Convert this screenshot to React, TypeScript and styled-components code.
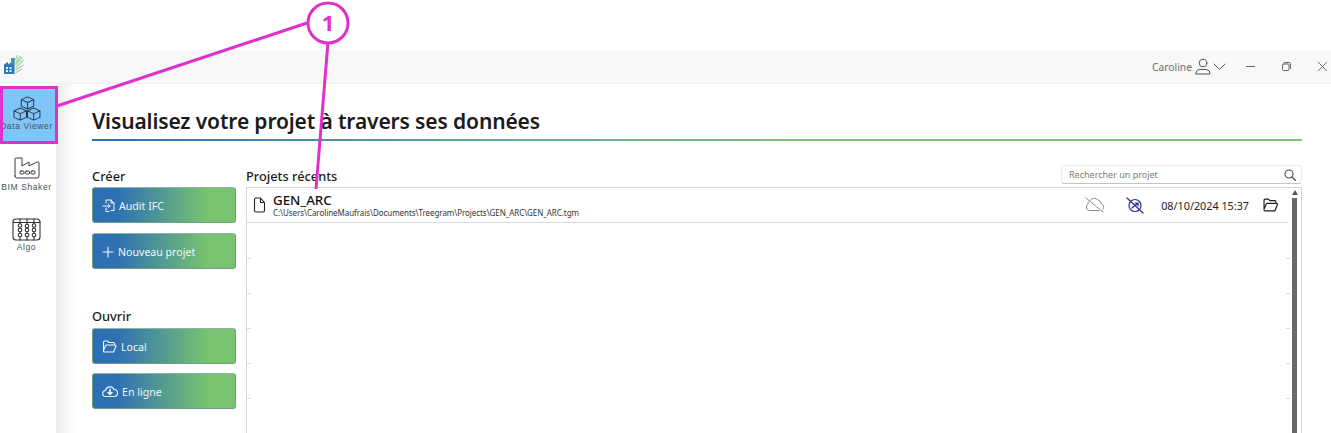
import React from "react";
import styled, { createGlobalStyle } from "styled-components";

const Global = createGlobalStyle`
  html, body { margin: 0; padding: 0; background: #fff; }
  body { font-family: "Noto Sans", "Open Sans", sans-serif; color: #1c1c1c; }
`;
const Page = styled.div`
  position: relative; width: 1331px; height: 433px; overflow: hidden; background: #fff;
`;
const TopGap = styled.div`height: 50px;`;
const TitleBar = styled.header`
  height: 34px; box-sizing: border-box; display: flex; align-items: center;
  background: #f8f8f8; border-bottom: 1px solid #f0f0f0; padding: 0 0 0 3px;
`;
const Logo = styled.svg`width: 21px; height: 21px; margin-top: -2px;`;
const Spacer = styled.div`flex: 1;`;
const UserName = styled.span`font-size: 10.3px; color: #6e6e6e; margin-right: 3px;`;
const WinButtons = styled.div`
  display: flex; align-items: center; gap: 27px; margin-left: 20px; padding-right: 4px;
`;
const Body = styled.div`display: flex; height: 349px;`;
const Sidebar = styled.nav`
  width: 56px; flex: none; display: flex; flex-direction: column; align-items: stretch;
  padding-top: 3px; background: #fff;
`;
const NavItem = styled.div<{ $active?: boolean; $h: number; $pt: number; $gap: number }>`
  height: ${(p) => p.$h}px; display: flex; flex-direction: column; align-items: center;
  justify-content: flex-start; background: ${(p) => (p.$active ? "#80c5fa" : "transparent")};
  box-sizing: border-box; padding: ${(p) => p.$pt}px 3px 0 0; gap: ${(p) => p.$gap}px;
`;
const NavLabel = styled.span`
  font-family: "Liberation Sans", sans-serif; font-size: 8.5px; letter-spacing: 0.6px; color: #46525c;
  white-space: nowrap; line-height: 10px;
`;
const Main = styled.main`
  flex: 1; min-width: 0; padding: 0 29px 0 36px; display: flex; flex-direction: column;
  background: linear-gradient(90deg, #ececec 0, #fafafa 14px, #fff 24px);
`;
const Title = styled.h1`
  margin: 22px 0 0; font-size: 21px; line-height: 30px; font-weight: 600; color: #1b1b1b;
  letter-spacing: -0.13px;
`;
const Rule = styled.div`
  height: 2px; margin-top: 3px; background: linear-gradient(90deg, #2a6db5 0%, #5fa58f 30%, #7cc673 62%);
`;
const Columns = styled.div`display: flex; gap: 10px; margin-top: 24px; flex: 1; min-height: 0;`;
const Left = styled.div`width: 144px; flex: none; display: flex; flex-direction: column;`;
const SectionLabel = styled.div<{ $gap?: number }>`
  font-size: 12.8px; font-weight: 500; line-height: 22px; color: #1c1c1c; margin-top: ${(p) => p.$gap ?? 0}px;
`;
const ActionButton = styled.button<{ $mt?: number; $gap?: number }>`
  width: 144px; height: 36px; flex: none; box-sizing: border-box; margin-top: ${(p) => p.$mt ?? 0}px;
  padding: 1px 0 0 9px; display: flex; align-items: center; gap: ${(p) => p.$gap ?? 4}px;
  border: 1px solid #6f9e7e; border-top-color: #8fb5a0; border-radius: 3px;
  background: linear-gradient(90deg, #2a6fb5 0%, #2f72b2 18%, #78c270 80%, #78c270 100%);
  color: #f2f7fb; font-family: inherit; font-size: 10.6px; line-height: 14px; text-align: left;
`;
const Right = styled.div`flex: 1; min-width: 0; display: flex; flex-direction: column;`;
const RightHead = styled.div`display: flex; align-items: flex-end; justify-content: space-between; height: 22px;`;
const Search = styled.div`
  width: 241px; height: 19px; box-sizing: border-box; display: flex; align-items: center;
  justify-content: space-between; padding: 0 5px 0 7px; margin-bottom: 3px;
  border: 1px solid #ededed; border-bottom-color: #c4c4c4; border-radius: 3px;
  font-size: 9px; color: #7c7c7c; background: #fff;
`;
const Table = styled.div`
  position: relative; flex: 1; min-height: 0; border: 1px solid #d6d6d6; border-bottom: none;
  background: #fff;
`;
const Row = styled.div`
  height: 35px; box-sizing: border-box; margin-right: 13px; display: flex; align-items: center;
  border-bottom: 1px solid #d9d9d9; padding-left: 6px;
`;
const FileBlock = styled.div`display: flex; flex-direction: column; margin-left: 7px; flex: 1;`;
const FileName = styled.div`font-size: 13.3px; font-weight: 500; line-height: 15px; color: #111;`;
const FilePath = styled.div`font-size: 8px; line-height: 10px; color: #333; letter-spacing: -0.06px;`;
const RowDate = styled.span`font-size: 10.8px; color: #222; margin: 0 13px 0 17px;`;
const RowEnd = styled.div`width: 9px; flex: none;`;
const ScrollBar = styled.div`
  position: absolute; top: 2px; right: 4px; bottom: 0; width: 5px;
  display: flex; flex-direction: column; align-items: center;
`;
const ScrollArrow = styled.div`
  width: 0; height: 0; border-left: 3.5px solid transparent; border-right: 3.5px solid transparent;
  border-bottom: 5px solid #555;
`;
const ScrollThumb = styled.div`flex: 1; width: 5px; margin-top: 3px; background: #6a6a6a;`;
const Tick = styled.div<{ $side: "left" | "right"; $top: number }>`
  position: absolute; top: ${(p) => p.$top}px; ${(p) => p.$side}: ${(p) => (p.$side === "right" ? 11 : 0)}px;
  width: 4px; height: 1px; background: #dcdcdc;
`;
const Overlay = styled.svg`position: absolute; left: 0; top: 0; pointer-events: none;`;
const CalloutNumber = styled.text`
  font-family: "Open Sans", sans-serif; font-size: 22px; font-weight: 700; fill: #e030cc;
`;

const Stroke = { fill: "none", stroke: "currentColor", strokeLinecap: "round", strokeLinejoin: "round" } as const;

const Cubes = () => (
  <svg width="28" height="25" viewBox="1 0 27 27" preserveAspectRatio="none" style={{ color: "#2d3a44" }} {...Stroke} strokeWidth={1}>
    <path d="M15 1l6 3v7l-6 3-6-3V4z M9 4l6 3 6-3 M15 7v7" />
    <path d="M8 13l6 3v7l-6 3-6-3v-7z M2 16l6 3 6-3 M8 19v7" />
    <path d="M21 13l6 3v7l-6 3-6-3v-7z M15 16l6 3 6-3 M21 19v7" />
  </svg>
);
const Factory = () => (
  <svg width="26" height="22" viewBox="0 0 26 22" style={{ color: "#3c3c3c" }} {...Stroke} strokeWidth={1}>
    <path d="M1 19V2q0-1 1-1h6v8l7-4v4l8-4q2-.5 2 1V19q0 2-2 2H3q-2 0-2-2z" />
    <rect x="6" y="14" width="4" height="3" rx="1" />
    <rect x="11.500" y="14" width="4" height="3" rx="1" />
    <rect x="17" y="14" width="4" height="3" rx="1" />
  </svg>
);
const Abacus = () => (
  <svg width="29" height="23" viewBox="0 0 29 23" style={{ color: "#333" }} {...Stroke} strokeWidth={1.1}>
    <rect x="1" y="1" width="27" height="21" rx="3" />
    <path d="M1 4.500h27M8 1v21M15 1v21M22 1v21" />
    {[8, 15, 22].map((x) => (
      <g key={x}>
        <circle cx={x} cy={x === 15 ? 8 : 7.500} r="1.800" fill="#f8f8f8" />
        <circle cx={x} cy="12" r="1.800" fill="#fff" />
        <circle cx={x} cy="17" r="1.800" fill="#fff" />
      </g>
    ))}
  </svg>
);
const AuditIcon = () => (
  <svg width="15" height="15" viewBox="0 0 15 15" {...Stroke} strokeWidth={1}>
    <path d="M4 5V2h5l3 3v7.500H9M9 2v3h3M4 10v3.500h3M1 8h7M6 6l2 2-2 2" />
  </svg>
);
const PlusIcon = () => (
  <svg width="12" height="12" viewBox="0 0 12 12" {...Stroke} strokeWidth={1.1}>
    <path d="M6 1v10M1 6h10" />
  </svg>
);
const FolderOpen = ({ w = 15, h = 13 }: { w?: number; h?: number }) => (
  <svg width={w} height={h} viewBox="0 0 15 13" {...Stroke} strokeWidth={1.1}>
    <path d="M1.500 10.500V2q0-1 1-1h3l1.500 1.500h4.500q1 0 1 1V5M1.500 11.500q.5.5 1 .5h9l2.500-6q0-1-1-1H4.500q-.7 0-1 .7L1.500 10.500" />
  </svg>
);
const CloudDown = () => (
  <svg width="16" height="13" viewBox="0 0 16 13" {...Stroke} strokeWidth={1.1}>
    <path d="M4 11.500a3 3 0 0 1-.5-6A4.500 4.500 0 0 1 12 4.500a3.500 3.500 0 0 1 0 7z" />
    <path d="M8 4.500v4.500M6 7.500l2 2 2-2" strokeWidth={1.6} />
  </svg>
);
const FileIcon = () => (
  <svg width="13" height="16" viewBox="0 0 13 16" style={{ color: "#222", flex: "none" }} {...Stroke} strokeWidth={1.1}>
    <path d="M1.500 2.500q0-1.500 1.500-1.500h4.500l4 4.500v8q0 1.500-1.500 1.500H3q-1.500 0-1.500-1.500zM7.500 1v4.500h4" />
  </svg>
);
const CloudOff = () => (
  <svg width="20" height="16" viewBox="0 0 20 16" style={{ color: "#8b8b8b", flex: "none" }} {...Stroke} strokeWidth={1}>
    <path d="M1 1l17 14M5 3.500A5 5 0 0 1 13 3a4 4 0 0 1 3 3.500 3.500 3.500 0 0 1 2 5.500M14 13.500H5a3.500 3.500 0 0 1-2-6.500q0-1 .5-2" />
  </svg>
);
const SyncOff = () => (
  <svg width="18" height="17" viewBox="0 0 18 17" style={{ color: "#2f2f8f", flex: "none", marginLeft: 21 }} {...Stroke} strokeWidth={1.2}>
    <path d="M1 1l16 15" />
    <circle cx="9" cy="8.500" r="6" />
    <path d="M6 11l6-5M9 6h3v3" />
  </svg>
);
const UserIcon = () => (
  <svg width="16" height="17" viewBox="0 0 16 17" style={{ color: "#555" }} {...Stroke} strokeWidth={1}>
    <circle cx="8" cy="5" r="3.800" />
    <path d="M1 15.500q0-4 4-4h6q4 0 4 4v.5H1z" />
  </svg>
);
const Chevron = () => (
  <svg width="13" height="8" viewBox="0 0 13 8" style={{ color: "#555", marginLeft: 2 }} {...Stroke} strokeWidth={1}>
    <path d="M1 1l5.500 5.500L12 1" />
  </svg>
);
const Minimize = () => (
  <svg width="9" height="9" viewBox="0 0 9 9" style={{ color: "#666" }} {...Stroke} strokeWidth={1}>
    <path d="M0 4.500h9" />
  </svg>
);
const Restore = () => (
  <svg width="9" height="9" viewBox="0 0 9 9" style={{ color: "#666" }} {...Stroke} strokeWidth={1}>
    <rect x="0.500" y="2" width="6.500" height="6.500" rx="1" />
    <path d="M2.500 .5h5q1 0 1 1v5" />
  </svg>
);
const CloseX = () => (
  <svg width="9" height="9" viewBox="0 0 9 9" style={{ color: "#666" }} {...Stroke} strokeWidth={1}>
    <path d="M.5.5l8 8M8.500.5l-8 8" />
  </svg>
);
const SearchIcon = () => (
  <svg width="12" height="12" viewBox="0 0 12 12" style={{ color: "#444" }} {...Stroke} strokeWidth={1.1}>
    <circle cx="5" cy="5" r="4" />
    <path d="M8 8l3.500 3.500" />
  </svg>
);

export default function App() {
  return (
    <Page>
      <Global />
      <TopGap />
      <TitleBar>
        <Logo viewBox="0 0 21 21">
          <path d="M1 9.500l4-2.500v2.500l3-2V3h3.500v16H1z" fill="#2f78b8" />
          <path d="M8 3h3.500v6H8z" fill="#3f9a9a" />
          <path d="M3 12h2v2H3zM6.500 12h2v2h-2zM3 15h2v2H3zM6.500 15h2v2h-2z" fill="#e8f2fa" />
          <path d="M12.500 5l2-5M12.500 8l5-7M12.500 10l7-8M12.500 13l8-8M12.500 15l8-5M12.500 18l6-4" stroke="#a3d4a6" strokeWidth="1.300" fill="none" />
        </Logo>
        <Spacer />
        <UserName>Caroline</UserName>
        <UserIcon />
        <Chevron />
        <WinButtons>
          <Minimize />
          <Restore />
          <CloseX />
        </WinButtons>
      </TitleBar>
      <Body>
        <Sidebar>
          <NavItem $active $h={55} $pt={9} $gap={0}>
            <Cubes />
            <NavLabel>Data Viewer</NavLabel>
          </NavItem>
          <NavItem $h={60} $pt={15} $gap={3}>
            <Factory />
            <NavLabel>BIM Shaker</NavLabel>
          </NavItem>
          <NavItem $h={60} $pt={16} $gap={1}>
            <Abacus />
            <NavLabel>Algo</NavLabel>
          </NavItem>
        </Sidebar>
        <Main>
          <Title>Visualisez votre projet à travers ses données</Title>
          <Rule />
          <Columns>
            <Left>
              <SectionLabel>Créer</SectionLabel>
              <ActionButton $gap={2}><AuditIcon />Audit IFC</ActionButton>
              <ActionButton $mt={10}><PlusIcon />Nouveau projet</ActionButton>
              <SectionLabel $gap={36}>Ouvrir</SectionLabel>
              <ActionButton $mt={1}><FolderOpen />Local</ActionButton>
              <ActionButton $mt={9}><CloudDown />En ligne</ActionButton>
            </Left>
            <Right>
              <RightHead>
                <SectionLabel>Projets récents</SectionLabel>
                <Search>Rechercher un projet<SearchIcon /></Search>
              </RightHead>
              <Table>
                <Row>
                  <FileIcon />
                  <FileBlock>
                    <FileName>GEN_ARC</FileName>
                    <FilePath>C:\Users\CarolineMaufrais\Documents\Treegram\Projects\GEN_ARC\GEN_ARC.tgm</FilePath>
                  </FileBlock>
                  <CloudOff />
                  <SyncOff />
                  <RowDate>08/10/2024 15:37</RowDate>
                  <FolderOpen w={17} h={14} />
                  <RowEnd />
                </Row>
                {[70, 105, 140, 175, 210].map((t) => (
                  <React.Fragment key={t}>
                    <Tick $side="left" $top={t} />
                    <Tick $side="right" $top={t} />
                  </React.Fragment>
                ))}
                <ScrollBar>
                  <ScrollArrow />
                  <ScrollThumb />
                </ScrollBar>
              </Table>
            </Right>
          </Columns>
        </Main>
      </Body>
      <Overlay width="1331" height="433" viewBox="0 0 1331 433">
        <rect x="1.500" y="87.500" width="55" height="55" fill="none" stroke="#e030cc" strokeWidth="3" />
        <line x1="57" y1="106" x2="307" y2="23" stroke="#e030cc" strokeWidth="3" />
        <line x1="328" y1="42" x2="316" y2="189" stroke="#e030cc" strokeWidth="3" />
        <circle cx="328" cy="23" r="20" fill="#fff" stroke="#e030cc" strokeWidth="3" />
        <CalloutNumber x="328" y="31" textAnchor="middle">1</CalloutNumber>
      </Overlay>
    </Page>
  );
}
